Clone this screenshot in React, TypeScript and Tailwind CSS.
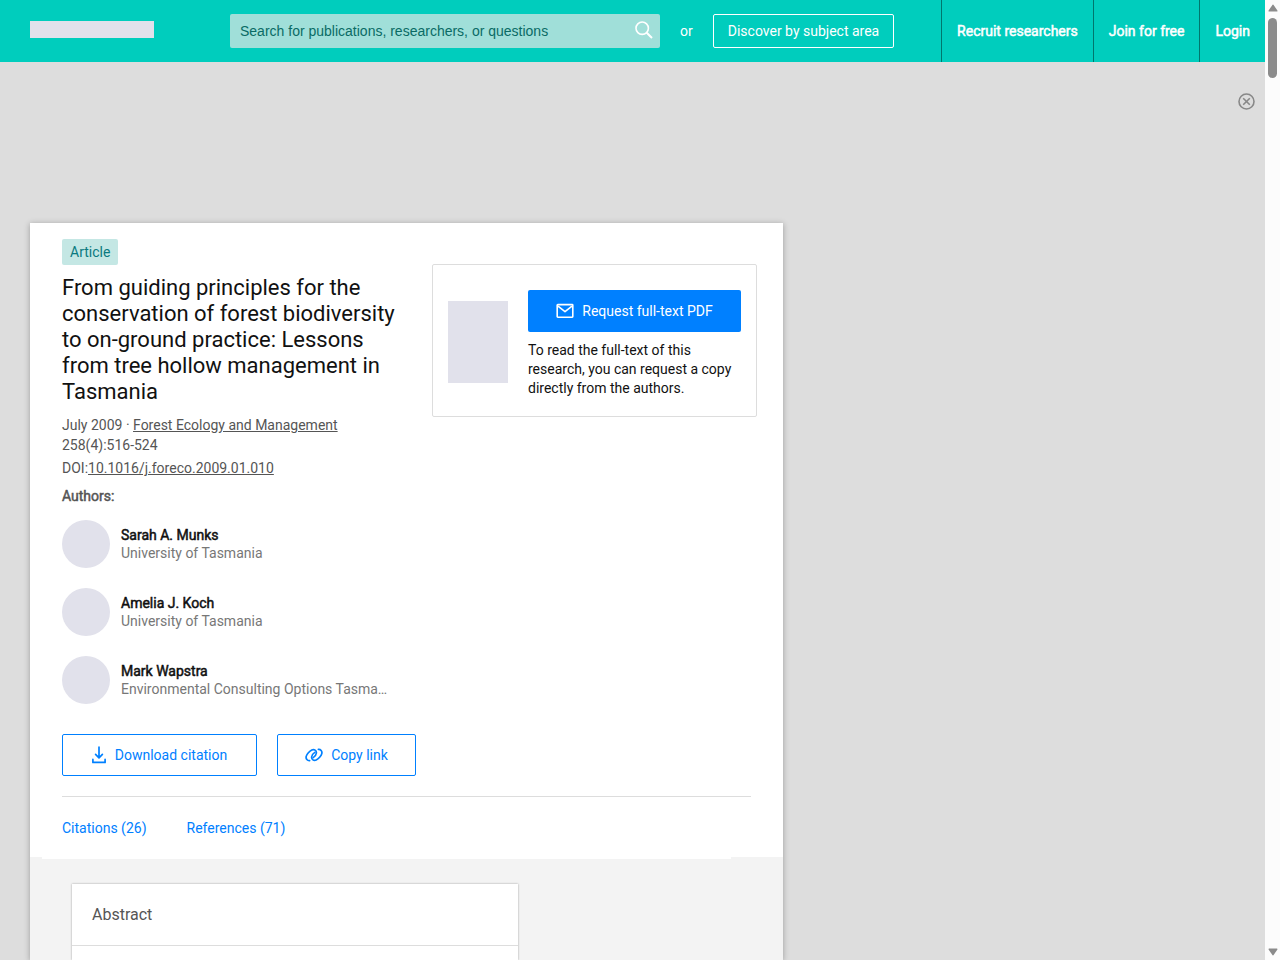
import React from 'react';

interface Author {
  name: string;
  institution: string;
}

const AUTHORS: Author[] = [
  { name: 'Sarah A. Munks', institution: 'University of Tasmania' },
  { name: 'Amelia J. Koch', institution: 'University of Tasmania' },
  { name: 'Mark Wapstra', institution: 'Environmental Consulting Options Tasma…' },
];

const NAV_LINKS = ['Recruit researchers', 'Join for free', 'Login'];

const SearchIcon = () => (
  <svg width="18" height="18" viewBox="0 0 18 18" fill="none" stroke="currentColor" strokeWidth="1.6">
    <circle cx="7.2" cy="7.2" r="6.2" />
    <path d="M11.7 11.7 17 17" strokeWidth="2" />
  </svg>
);

const MailIcon = () => (
  <svg width="18" height="16" viewBox="0 0 18 16" fill="none" stroke="currentColor" strokeWidth="1.6" strokeLinejoin="round">
    <rect x="1.2" y="1.6" width="15.6" height="12.6" rx="0.6" />
    <path d="M2 3.2 9 8.6 16 3.2" />
  </svg>
);

const DownloadIcon = () => (
  <svg width="14" height="18" viewBox="0 0 14 18" fill="none" stroke="currentColor" strokeWidth="1.7" strokeLinecap="round" strokeLinejoin="round">
    <path d="M7 1.2V11.5M3.6 8.4 7 11.8 10.4 8.4" />
    <path d="M0.9 13.4V16.4H13.1V13.4" />
  </svg>
);

const LinkIcon = () => (
  <svg width="18" height="14" viewBox="0 0 18 14" fill="none" stroke="currentColor" strokeWidth="1.7" strokeLinecap="round" strokeLinejoin="round">
    <path d="M4.6 12.6C2.4 12.8.6 10.8 1.2 8.4 1.7 6.2 4.6 3 6.8 2 9.2.9 11.6 2.4 11.4 5 11.2 7 9.6 8.7 8.2 9.6" />
    <path d="M13.4 1.4C15.6 1.2 17.4 3.2 16.8 5.6 16.3 7.8 13.4 11 11.2 12 8.8 13.1 6.4 11.6 6.6 9 6.8 7 8.4 5.3 9.8 4.4" />
  </svg>
);

const CloseIcon = () => (
  <svg width="17" height="17" viewBox="0 0 17 17" fill="none" stroke="currentColor" strokeWidth="1.6">
    <circle cx="8.5" cy="8.5" r="7.5" />
    <path d="M5.2 5.2 11.8 11.8M11.8 5.2 5.2 11.8" />
  </svg>
);

const Header = () => (
  <header className="flex h-[62px] items-center bg-[#00cdbd] pl-[30px] text-sm text-white">
    <a href="#home" aria-label="Home" className="mb-1 h-[17px] w-[124px] shrink-0 bg-[#e1e1eb]" />
    <form className="relative ml-[76px] h-[34px] w-[430px]">
      <input
        type="text"
        aria-label="Search"
        placeholder="Search for publications, researchers, or questions"
        className="h-full w-full rounded-xs bg-[#a0dfd9] pr-10 pl-[10px] font-['Liberation_Sans',sans-serif] text-sm text-[#0a6b65] outline-none placeholder:text-[#0a6b65]"
      />
      <button type="button" aria-label="Submit search" className="absolute top-[7px] right-[7px]">
        <SearchIcon />
      </button>
    </form>
    <span className="mx-5 shrink-0">or</span>
    <a href="#topics" className="flex h-[34px] shrink-0 items-center rounded-xs border border-white px-[14px]">
      Discover by subject area
    </a>
    <nav className="ml-auto flex h-full">
      {NAV_LINKS.map((label) => (
        <a
          key={label}
          href="#account"
          className="flex shrink-0 items-center border-l border-[#00766d] px-[15px] [-webkit-text-stroke:0.5px_currentColor]"
        >
          {label}
        </a>
      ))}
    </nav>
  </header>
);

const RequestBox = () => (
  <aside className="mt-[25px] flex h-[153px] w-[325px] shrink-0 items-start gap-5 rounded-xs border border-[#dddddd] px-[15px] pt-[25px]">
    <div className="mt-[11px] h-[82px] w-[60px] shrink-0 bg-[#e1e1eb]" />
    <div className="grow text-[#111111]">
      <button type="button" className="flex h-[42px] w-full items-center justify-center gap-2 rounded-xs bg-[#0080ff] text-sm text-white">
        <MailIcon />
        Request full-text PDF
      </button>
      <p className="mt-[9px] text-sm leading-[19px]">
        To read the full-text of this research, you can request a copy directly from the authors.
      </p>
    </div>
  </aside>
);

const AuthorRow = ({ name, institution }: Author) => (
  <li className="flex h-12 items-center gap-[11px]">
    <div className="size-12 shrink-0 rounded-full bg-[#e1e1eb]" />
    <div className="text-sm leading-[18px] whitespace-nowrap">
      <a href="#author" className="text-[#111111] [-webkit-text-stroke:0.5px_currentColor]">{name}</a>
      <div className="text-[#777777]">{institution}</div>
    </div>
  </li>
);

const Publication = () => (
  <main className="mt-[161px] ml-[30px] flex w-[753px] max-w-full grow flex-col bg-white shadow-[0_1px_6px_rgba(0,0,0,0.3)]">
    <div className="flex gap-4 pt-4 pl-8">
      <div className="w-[354px] shrink-0 text-sm leading-5 text-[#555555]">
        <span className="inline-block rounded-xs bg-[#c4e7e4] px-2 py-[3px] text-[#0a7a80]">Article</span>
        <h1 className="mt-[10px] w-[338px] text-[22px] leading-[26px] text-[#111111]">
          From guiding principles for the conservation of forest biodiversity to on-ground practice: Lessons from tree
          hollow management in Tasmania
        </h1>
        <div className="mt-[10px]">
          July 2009 · <a href="#journal" className="underline">Forest Ecology and Management</a>
          <br />
          258(4):516-524
        </div>
        <div className="mt-[3px]">
          DOI:<a href="#doi" className="underline">10.1016/j.foreco.2009.01.010</a>
        </div>
        <h2 className="mt-2 [-webkit-text-stroke:0.5px_currentColor]">Authors:</h2>
        <ul className="mt-[14px] flex flex-col gap-5">
          {AUTHORS.map((author) => (
            <AuthorRow key={author.name} {...author} />
          ))}
        </ul>
        <div className="mt-[30px] flex gap-5 text-[#0080ff]">
          <button type="button" className="flex h-[42px] w-[195px] items-center justify-center gap-[9px] rounded-xs border border-[#0080ff]">
            <DownloadIcon />
            Download citation
          </button>
          <button type="button" className="flex h-[42px] w-[139px] items-center justify-center gap-2 rounded-xs border border-[#0080ff]">
            <LinkIcon />
            Copy link
          </button>
        </div>
      </div>
      <RequestBox />
    </div>

    <nav className="mx-8 mt-5 flex gap-10 border-t border-[#dddddd] pt-[21px] pb-[19px] text-sm text-[#0080ff]">
      <a href="#citations">Citations (26)</a>
      <a href="#references">References (71)</a>
    </nav>

    <div className="flex grow flex-col bg-[#f3f3f3]">
      <div className="mr-[52px] ml-3 h-[2px] bg-white" />
      <section className="mt-[25px] ml-[42px] w-[446px] grow bg-white shadow-[0_0_2px_rgba(0,0,0,0.35)]">
        <h2 className="border-b border-[#dddddd] px-5 pt-[19px] pb-[18px] text-base text-[#555555]">Abstract</h2>
      </section>
    </div>
  </main>
);

// Page scroll track, drawn as a slim column on the right
const ScrollTrack = () => (
  <div className="flex w-[15px] shrink-0 flex-col items-center justify-between bg-[#fcfcfc] pt-1 pb-1 text-[#8b8b8b]">
    <div className="flex flex-col items-center gap-[6px]">
      <svg width="10" height="8" viewBox="0 0 10 8" fill="currentColor">
        <path d="M5 .5Q5.4.5 5.8 1.2L9.4 6.4Q9.8 7.5 8.8 7.5H1.2Q.2 7.5.6 6.4L4.2 1.2Q4.6.5 5 .5Z" />
      </svg>
      <div className="h-[60px] w-[9px] rounded-full bg-[#8b8b8b]" />
    </div>
    <svg width="10" height="8" viewBox="0 0 10 8" fill="currentColor">
      <path d="M5 7.5Q5.4 7.5 5.8 6.8L9.4 1.6Q9.8.5 8.8.5H1.2Q.2.5.6 1.6L4.2 6.8Q4.6 7.5 5 7.5Z" />
    </svg>
  </div>
);

const App: React.FC = () => {
  return (
    <div className="flex h-screen overflow-hidden bg-[#dddddd] font-[Roboto,sans-serif]">
      <div className="relative flex min-w-0 grow flex-col">
        <Header />
        <button type="button" aria-label="Close" className="absolute top-[93px] right-[10px] text-[#888888]">
          <CloseIcon />
        </button>
        <Publication />
      </div>
      <ScrollTrack />
    </div>
  );
};

export default App;
